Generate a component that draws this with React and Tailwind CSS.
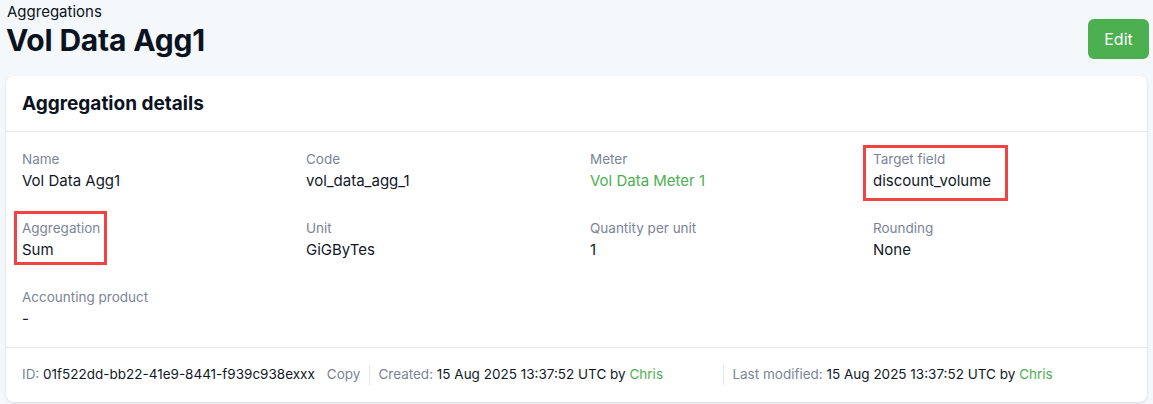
import React from "react";

const fields = [
  { label: "Name", value: "Vol Data Agg1" },
  { label: "Code", value: "vol_data_agg_1" },
  { label: "Meter", value: "Vol Data Meter 1", link: true },
  { label: "Target field", value: "discount_volume", box: "-top-[3px] -left-[10px] w-[145px] h-[56px]" },
  { label: "Aggregation", value: "Sum", box: "-top-[6px] -left-[8px] w-[93px] h-[54px]" },
  { label: "Unit", value: "GiGByTes" },
  { label: "Quantity per unit", value: "1" },
  { label: "Rounding", value: "None" },
  { label: "Accounting product", value: "-" },
];

function Field({ label, value, link, box }) {
  return (
    <div className="relative">
      <p className="text-[13.5px] leading-[22px] text-[#7b8597]">{label}</p>
      <p
        className={
          "text-[15px] leading-[22px] " +
          (link ? "text-[#4caf50]" : "text-[#111827]")
        }
      >
        {value}
      </p>
      {/* highlight annotation */}
      {box && (
        <div className={"absolute border-[3px] border-[#f04444] " + box} />
      )}
    </div>
  );
}

export default function App() {
  return (
    <div
      className="min-h-screen bg-[#f5f8fb] px-[6px] text-[#0b1220]"
      style={{ fontFamily: "Inter, 'Noto Sans', sans-serif" }}
    >
      {/* Header */}
      <div className="flex items-start justify-between">
        <div>
          <p className="text-[15px] leading-[24px] pl-[1px]">Aggregations</p>
          <h1 className="text-[30px] leading-[36px] font-bold tracking-[-0.2px] -mt-[2px]">
            Vol Data Agg1
          </h1>
        </div>
        <button className="mt-[19px] mr-[-2px] h-[40px] w-[61px] rounded-[6px] bg-[#4caf50] text-[16px] text-white">
          Edit
        </button>
      </div>

      {/* Card */}
      <div className="mt-[17px] rounded-[8px] bg-white shadow-[0_1px_3px_rgba(0,0,0,0.12)]">
        <div className="px-4 pt-[2px] h-[56px] flex items-center border-b border-[#e4e6ee]">
          <h2 className="text-[19px] font-bold text-[#0b1220]">
            Aggregation details
          </h2>
        </div>

        <div className="grid grid-cols-[284px_284px_283px_1fr] gap-y-[25px] px-4 pt-[16px] pb-[17px] border-b border-[#e4e6ee]">
          {fields.map((f) => (
            <Field key={f.label} {...f} />
          ))}
        </div>

        <div className="flex items-center px-4 pb-[1px] h-[54px] text-[13.5px] text-[#7b8597]">
          <span>
            ID: <span className="text-[#111827]">01f522dd-bb22-41e9-8441-f939c938exxx</span>
          </span>
          <span className="ml-[12px]">Copy</span>
          <span className="ml-[9px] mr-2 h-[20px] w-px bg-[#e4e6ee]" />
          <span className="w-[345px]">
            Created:{" "}
            <span className="text-[#111827]">15 Aug 2025 13:37:52 UTC by </span>
            <span className="text-[#4caf50]">Chris</span>
          </span>
          <span className="mr-2 h-[20px] w-px bg-[#e4e6ee]" />
          <span>
            Last modified:{" "}
            <span className="text-[#111827]">15 Aug 2025 13:37:52 UTC by </span>
            <span className="text-[#4caf50]">Chris</span>
          </span>
        </div>
      </div>
    </div>
  );
}
